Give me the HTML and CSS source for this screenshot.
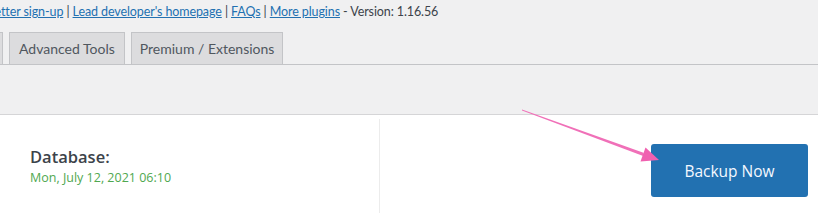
FILE: index.html
```html
<!DOCTYPE html>
<html lang="en">
<head>
    <meta charset="UTF-8">
    <meta name="viewport" content="width=device-width, initial-scale=1.0">
    <title>Backup</title>
    <link rel="stylesheet" href="styles.css">
</head>
<body>
    <div class="plugin-links">
        <a href="#">Newsletter sign-up</a> | <a href="#">Lead developer's homepage</a> | <a href="#">FAQs</a> | <a href="#">More plugins</a> - Version: 1.16.56
    </div>

    <nav class="nav-tabs">
        <a class="nav-tab hidden-tab" href="#"></a>
        <a class="nav-tab" href="#">Advanced Tools</a>
        <a class="nav-tab" href="#">Premium / Extensions</a>
    </nav>

    <div class="notice-space"></div>

    <div class="backup-panel">
        <div class="last-backup">
            <div class="backup-label">Database:</div>
            <div class="backup-date">Mon, July 12, 2021 06:10</div>
        </div>
        <div class="backup-actions">
            <button class="backup-now">Backup Now</button>
        </div>
    </div>

    <svg class="pointer-arrow" width="818" height="213" viewBox="0 0 818 213">
        <polygon points="522,109.6 522,110.4 644.5,156.4 643.5,152.8" fill="#f070b8"/>
        <polygon points="659,160 640.5,161.5 645.5,147.5" fill="#f060b0"/>
    </svg>
</body>
</html>
```

FILE: styles.css
```css
body {
    margin: 0;
    padding: 0;
    background-color: #f0f0f1;
    color: #3c434a;
    font-family: 'Open Sans', sans-serif;
    overflow: hidden;
    position: relative;
}

.plugin-links {
    font-family: 'Lato', sans-serif;
    font-size: 12.5px;
    letter-spacing: -0.1px;
    line-height: 16px;
    padding-top: 4px;
    margin-left: -39px;
    white-space: nowrap;
    color: #3c434a;
}

.plugin-links a {
    color: #2271b1;
}

.nav-tabs {
    display: flex;
    margin-top: 12px;
    margin-left: -77px;
    border-bottom: 1px solid #c3c4c7;
    height: 32px;
}

.nav-tab {
    display: block;
    box-sizing: border-box;
    height: 33px;
    padding: 0 9px;
    margin-left: 6px;
    border: 1px solid #c3c4c7;
    background-color: #dcdcde;
    color: #50575e;
    font-family: 'Lato', sans-serif;
    font-size: 14px;
    line-height: 31px;
    text-decoration: none;
    white-space: nowrap;
}

.nav-tab:last-child {
    padding: 0 8px;
}

.hidden-tab {
    width: 80px;
    margin-left: 0;
}

.notice-space {
    height: 49px;
    border-bottom: 1px solid #d5d5d7;
}

.backup-panel {
    display: flex;
    background-color: #fff;
    height: 100px;
}

.last-backup {
    width: 349px;
    padding: 27px 0 0 30px;
    margin-top: 4px;
    border-right: 1px solid #ececec;
}

.backup-label {
    font-size: 16.5px;
    font-weight: 600;
    line-height: 22px;
    color: #3c434a;
}

.backup-date {
    font-size: 12.5px;
    line-height: 20px;
    color: #50a850;
}

.backup-actions {
    flex: 1;
    display: flex;
    justify-content: flex-end;
    padding: 29px 10px 0 0;
}

.backup-now {
    width: 157px;
    height: 53px;
    border: none;
    border-radius: 3px;
    background-color: #2271b1;
    color: #f4f8ff;
    font-family: 'Open Sans', sans-serif;
    font-size: 15.5px;
    cursor: pointer;
}

.pointer-arrow {
    position: absolute;
    left: 0;
    top: 0;
    pointer-events: none;
}
```
